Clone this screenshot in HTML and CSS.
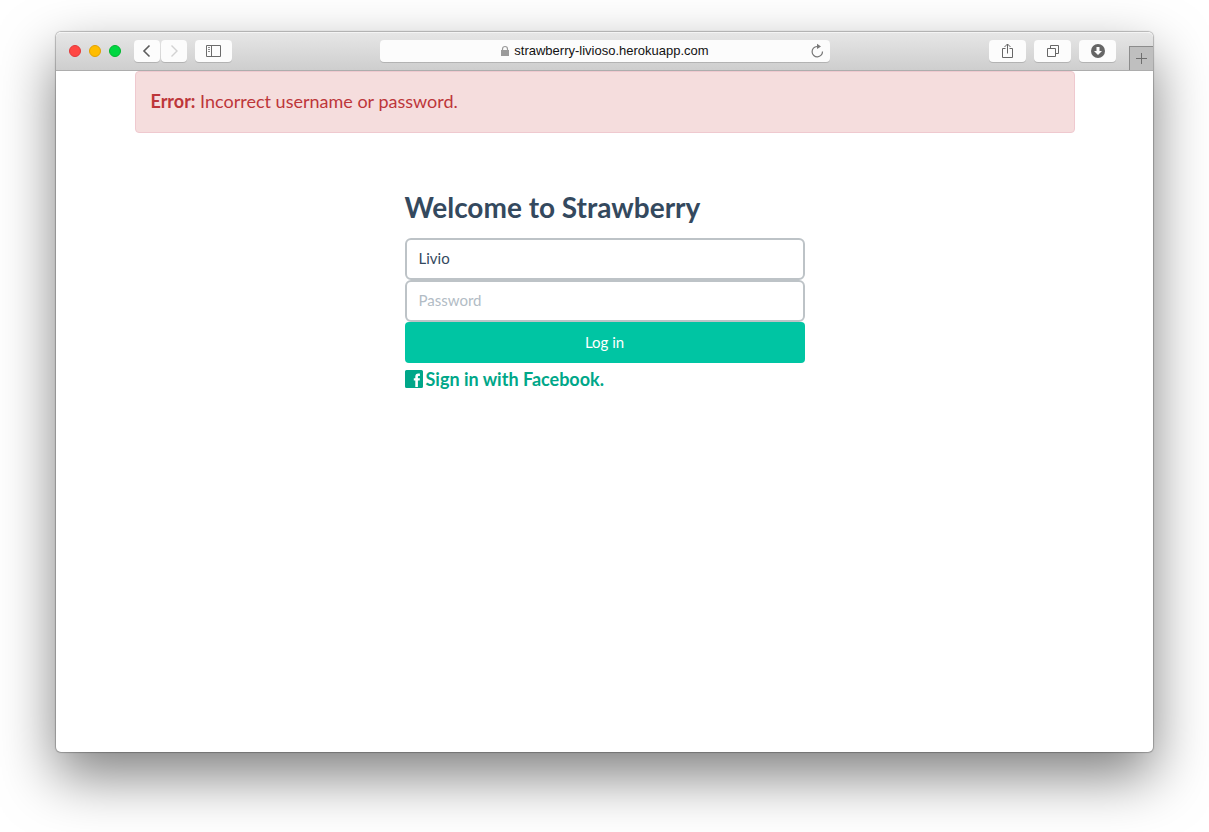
FILE: index.html
```html
<!DOCTYPE html>
<html lang="en">
<head>
<meta charset="utf-8">
<title>Strawberry</title>
<link rel="stylesheet" href="styles.css">
</head>
<body>
<div class="window">
  <header class="toolbar">
    <div class="toolbar-start">
      <div class="lights">
        <button class="light light-close" type="button" aria-label="Close"></button>
        <button class="light light-minimize" type="button" aria-label="Minimize"></button>
        <button class="light light-zoom" type="button" aria-label="Zoom"></button>
      </div>
      <div class="history">
        <button class="tool tool-narrow" type="button" aria-label="Back">
          <svg width="26" height="22" viewBox="0 0 26 22"><path d="M15.500 5.500 10 11l5.500 5.500" fill="none" stroke="#5c5c5c" stroke-width="1.600"/></svg>
        </button>
        <button class="tool tool-narrow" type="button" aria-label="Forward">
          <svg width="26" height="22" viewBox="0 0 26 22"><path d="M10.500 5.500 16 11l-5.500 5.500" fill="none" stroke="#d2d2d2" stroke-width="1.400"/></svg>
        </button>
      </div>
      <button class="tool" type="button" aria-label="Show sidebar">
        <svg width="37" height="22" viewBox="0 0 37 22"><path d="M11.500 5.500h14v11h-14zM16.500 5.500v11" fill="none" stroke="#6b6b6b"/><path d="M13 7.500h2M13 9.500h2M13 11.500h2" fill="none" stroke="#8c8c8c"/></svg>
      </button>
    </div>
    <div class="address">
      <span class="address-text">
        <svg width="10" height="12" viewBox="0 0 10 12"><path d="M1 5h8v6H1z" fill="#9a9a9a"/><path d="M2.500 5.500V4a2.500 2.500 0 0 1 5 0v1.500" fill="none" stroke="#9a9a9a" stroke-width="1.200"/></svg>
        <span>strawberry-livioso.herokuapp.com</span>
      </span>
      <button class="reload" type="button" aria-label="Reload">
        <svg width="14" height="16" viewBox="0 0 14 16"><path d="M7 3.500A5.200 5.200 0 1 0 12.500 8.500" fill="none" stroke="#777" stroke-width="1.200"/><path d="M7 .800v5.200L11 3.500z" fill="#777"/></svg>
      </button>
    </div>
    <div class="toolbar-end">
      <button class="tool" type="button" aria-label="Share">
        <svg width="37" height="22" viewBox="0 0 37 22"><path d="M16.500 8.500h-3v9h10v-9h-3M18.500 13.500V4M15.500 7l3-3 3 3" fill="none" stroke="#666"/></svg>
      </button>
      <button class="tool" type="button" aria-label="Show all tabs">
        <svg width="37" height="22" viewBox="0 0 37 22"><path d="M13.500 8.500h8v8h-8zM16.500 8.500v-3h8v8h-3" fill="none" stroke="#666"/></svg>
      </button>
      <button class="tool" type="button" aria-label="Downloads">
        <svg width="37" height="22" viewBox="0 0 37 22"><circle cx="19" cy="11" r="7" fill="#666"/><path d="M17.500 7h3v4h2.500l-4 4-4-4h2.500z" fill="#fff"/></svg>
      </button>
      <button class="new-tab" type="button" aria-label="New tab">
        <svg width="23" height="23" viewBox="0 0 23 23"><path d="M6 11.500h11M11.500 6v11" fill="none" stroke="#6e6e6e"/></svg>
      </button>
    </div>
  </header>
  <main class="page">
    <div class="alert" role="alert"><strong>Error:</strong> Incorrect username or password.</div>
    <form class="login">
      <h1 class="login-title">Welcome to Strawberry</h1>
      <input class="field" type="text" aria-label="Username" value="Livio">
      <input class="field" type="password" aria-label="Password" placeholder="Password">
      <button class="submit" type="button">Log in</button>
      <a class="facebook" href="#">
        <svg width="18" height="18" viewBox="0 0 18 18"><path d="M1.500 0h15A1.500 1.500 0 0 1 18 1.500v15a1.500 1.500 0 0 1-1.500 1.500h-15A1.500 1.500 0 0 1 0 16.500v-15A1.500 1.500 0 0 1 1.500 0z" fill="#00a789"/><path d="M10.300 17V10.500H8.800V8.200h1.500V6.700c0-2 1-3.100 3-3.100h1.600v2.300h-1c-.8 0-1 .3-1 1v1.300h2l-.2 2.300h-1.800V17z" fill="#fff"/></svg>
        <span>Sign in with Facebook.</span>
      </a>
    </form>
  </main>
</div>
</body>
</html>
```
FILE: styles.css
```css
* {
  box-sizing: border-box;
}

body {
  display: flex;
  min-height: 100vh;
  margin: 0;
  padding: 32px 56px 80px;
  overflow: hidden;
  background: #fff;
  color: #34495e;
  font-family: Lato, "Liberation Sans", sans-serif;
}

button {
  padding: 0;
  border: 0;
  font-family: inherit;
}

svg {
  display: block;
  flex: none;
}

.window {
  flex: 1;
  min-width: 0;
  border-radius: 5px;
  background: #fff;
  box-shadow: 0 0 1px 1px rgba(0, 0, 0, 0.25), 0 24px 56px rgba(0, 0, 0, 0.5);
}

.toolbar {
  display: grid;
  grid-template-columns: 1fr minmax(0, 450px) 1fr;
  align-items: center;
  height: 39px;
  padding-bottom: 1px;
  border-top: 1px solid #f4f4f4;
  border-bottom: 1px solid #adadad;
  border-radius: 5px 5px 0 0;
  background: linear-gradient(#e6e6e6, #cecece);
}

.toolbar-start,
.toolbar-end {
  display: flex;
  align-items: center;
  gap: 8px;
}

.toolbar-start {
  padding-left: 13px;
}

.toolbar-end {
  align-self: stretch;
  justify-content: flex-end;
}

.lights {
  display: flex;
  gap: 8px;
  margin-right: 5px;
}

.light {
  width: 12px;
  height: 12px;
  border: 1px solid;
  border-radius: 50%;
}

.light-close {
  border-color: #e2383a;
  background: #ff4744;
}

.light-minimize {
  border-color: #e2a100;
  background: #ffbd00;
}

.light-zoom {
  border-color: #00b62f;
  background: #00d742;
}

.history {
  display: flex;
  gap: 1px;
}

.tool {
  display: flex;
  width: 37px;
  height: 22px;
  border-radius: 4px;
  background: #fcfcfc;
  box-shadow: 0 1px 0 rgba(0, 0, 0, 0.15);
}

.tool-narrow {
  width: 26px;
}

.address {
  display: flex;
  align-items: center;
  height: 22px;
  padding: 0 6px 0 20px;
  border-radius: 4px;
  background: #fcfcfc;
  box-shadow: 0 1px 0 rgba(0, 0, 0, 0.15);
  color: #111;
  font: 13px/22px "Liberation Sans", sans-serif;
}

.address-text {
  display: flex;
  flex: 1;
  align-items: center;
  justify-content: center;
  gap: 4px;
}

.reload {
  background: none;
}

.new-tab {
  align-self: flex-end;
  width: 24px;
  height: 24px;
  margin-bottom: -1px;
  margin-left: 5px;
  padding-bottom: 1px;
  border-top: 1px solid #8c8c8c;
  border-left: 1px solid #8c8c8c;
  background: #bfbfbf;
}

.page {
  max-width: 940px;
  margin: 0 auto;
}

.alert {
  padding: 14px 15px 16px;
  border: 1px solid #efc9cf;
  border-radius: 4px;
  background: #f5dddd;
  color: #bd363a;
  font-size: 18px;
  line-height: 30px;
}

.login {
  display: flex;
  flex-direction: column;
  max-width: 400px;
  margin: 56px auto 0;
}

.login-title {
  margin: 0 0 13px;
  font-size: 28px;
  font-weight: 700;
  line-height: 36px;
}

.field {
  width: 100%;
  height: 42px;
  padding: 0 12px 2px;
  border: 2px solid #bdc3c7;
  border-radius: 6px;
  background: #fff;
  color: #34495e;
  font: 15px/22px Lato, sans-serif;
}

.field::placeholder {
  color: #b2bcc5;
}

.submit {
  height: 41px;
  padding-bottom: 2px;
  border-radius: 4px;
  background: #00c5a3;
  color: #fff;
  font-size: 15px;
  line-height: 22px;
}

.facebook {
  display: flex;
  align-items: center;
  align-self: flex-start;
  gap: 3px;
  margin-top: 4px;
  color: #00a789;
  font-size: 18px;
  font-weight: 700;
  line-height: 24px;
  text-decoration: none;
}
```
